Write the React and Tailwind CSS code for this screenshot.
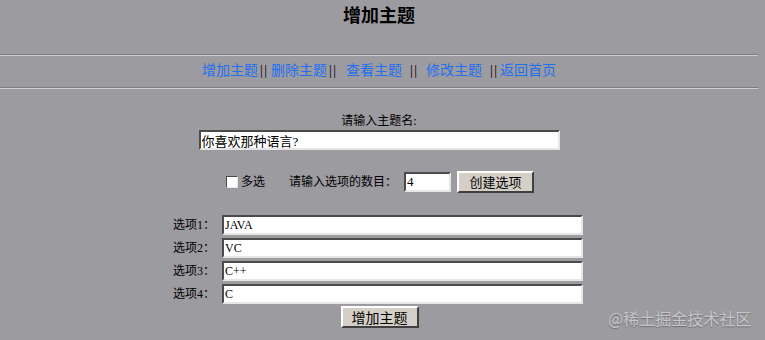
import React from "react";

const font = "font-['Liberation_Serif','Noto_Sans_CJK_SC',serif]";
const inset = "border-2 border-t-[#4a4a4a] border-l-[#4a4a4a] border-r-[#e6e6e6] border-b-[#e6e6e6] bg-white outline-none";
const outset = "border-2 border-t-white border-l-white border-r-[#404040] border-b-[#404040] bg-[#d4d0c8] text-black";

const Rule = () => <div className="w-[758px] border-t border-b border-t-[#7c7b80] border-b-[#cfced3]" />;

const Link = ({ children }) => <a className="text-[#1f6ff0]">{children}</a>;

export default function App() {
  const options = ["JAVA", "VC", "C++", "C"];
  return (
    <div className={`relative min-h-[340px] w-[765px] bg-[#9c9ba0] ${font} text-black`}>
      <div className="flex w-[758px] flex-col items-center">
        <h1 className="mt-[6px] h-[20px] text-[18px] font-bold leading-[20px]">增加主题</h1>
        <div className="mt-[28px]"><Rule /></div>

        {/* nav */}
        <div className="mt-[6px] whitespace-nowrap text-[14px] leading-[18px]">
          <Link>增加主题</Link>
          <span className="inline-block w-[13px] pl-[2px] tracking-[1.5px]">||</span>
          <Link>删除主题</Link>
          <span className="inline-block w-[19px] pl-[2px] tracking-[1.5px]">||</span>
          <Link>查看主题</Link>
          <span className="inline-block w-[24px] pl-[8px] tracking-[1.5px]">||</span>
          <Link>修改主题</Link>
          <span className="inline-block w-[18px] pl-[8px] tracking-[1.5px]">||</span>
          <Link>返回首页</Link>
        </div>
        <div className="mt-[7px]"><Rule /></div>

        <div className="mt-[24px] text-[12px] leading-[16px]">请输入主题名:</div>
        <input
          readOnly
          value="你喜欢那种语言?"
          className={`mt-[1px] h-[20px] w-[361px] px-[1px] text-[13px] ${inset}`}
        />

        <div className="mt-[21px] flex items-center text-[12px]">
          <span className={`ml-[2px] h-[12px] w-[12px] ${inset} border-[1.5px]`} />
          <span className="ml-[3px]">多选</span>
          <span className="ml-[24px]">请输入选项的数目：</span>
          <input readOnly value="4" className={`ml-[7px] h-[20px] w-[47px] px-[1px] text-[13px] ${inset}`} />
          <button className={`ml-[6px] h-[22px] w-[77px] text-[13px] ${outset}`}>创建选项</button>
        </div>

        <div className="mt-[22px] grid grid-cols-[40px_361px] items-center gap-x-[9px] gap-y-[3px] pr-[2px]">
          {options.map((o, i) => (
            <React.Fragment key={o}>
              <span className="whitespace-nowrap text-[12px]">选项{i + 1}：</span>
              <input readOnly value={o} className={`h-[20px] w-[361px] px-[1px] text-[12px] ${inset}`} />
            </React.Fragment>
          ))}
        </div>
        <button className={`mt-[2px] ml-[1px] h-[22px] w-[78px] text-[14px] ${outset}`}>增加主题</button>
      </div>

      <div className="absolute left-[608px] top-[306px] font-['Noto_Sans_CJK_SC',sans-serif] text-[16px] text-[#c7c6cb] [text-shadow:0_1px_1px_#6f6e73]">
        @稀土掘金技术社区
      </div>
    </div>
  );
}
